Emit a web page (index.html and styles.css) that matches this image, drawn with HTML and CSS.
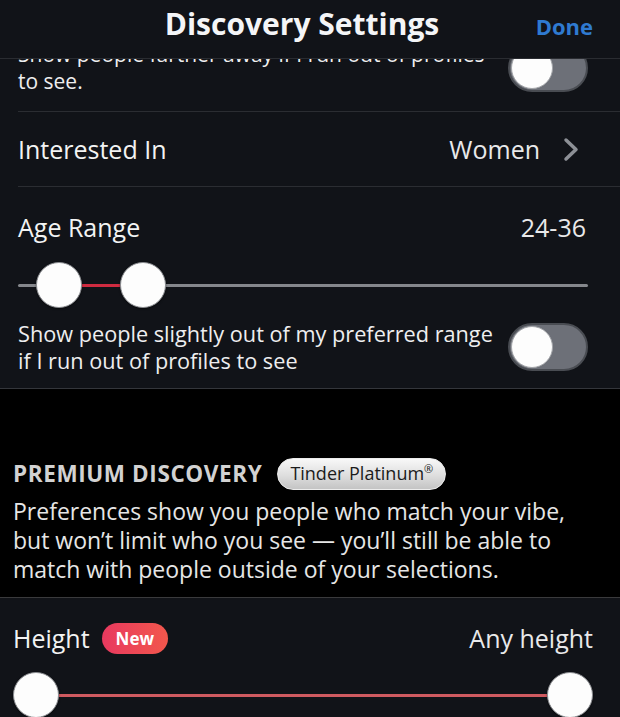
FILE: index.html
```html
<!DOCTYPE html>
<html lang="en">
<head>
	<meta charset="UTF-8">
	<title>Discovery Settings</title>
	<link rel="stylesheet" href="styles.css">
</head>
<body>
<div class="screen">
	<header class="topbar">
		<span></span>
		<h1>Discovery Settings</h1>
		<a class="done" href="#">Done</a>
	</header>

	<div class="viewport">
		<div class="list">
			<div class="row row-first">
				<p class="sub">Show people farther away if I run out of profiles to see.</p>
				<span class="switch"><span class="knob"></span></span>
			</div>

			<div class="row row-link">
				<span class="label">Interested In</span>
				<span class="value">Women
					<svg class="chev" width="16" height="25" viewBox="0 0 16 25"><polyline points="3,3 13,12.5 3,22" fill="none" stroke="#8d9096" stroke-width="3.5" stroke-linecap="round" stroke-linejoin="round"/></svg>
				</span>
			</div>

			<div class="row-age">
				<div class="head">
					<span class="label">Age Range</span>
					<span class="value">24-36</span>
				</div>
				<div class="slider">
					<span class="track"></span>
					<span class="fill" style="left:7.9%;width:15.8%"></span>
					<span class="thumb" style="--pos:0.035"></span>
					<span class="thumb" style="--pos:0.195"></span>
				</div>
				<div class="opt">
					<p class="sub">Show people slightly out of my preferred range if I run out of profiles to see</p>
					<span class="switch"><span class="knob"></span></span>
				</div>
			</div>

			<div class="premium">
				<div class="premium-head">
					<h2>PREMIUM DISCOVERY</h2>
					<span class="pill">Tinder Platinum<sup>®</sup></span>
				</div>
				<p>Preferences show you people who match your vibe, but won’t limit who you see — you’ll still be able to match with people outside of your selections.</p>
			</div>

			<div class="row-height">
				<div class="head">
					<span class="label">Height <span class="badge">New</span></span>
					<span class="value">Any height</span>
				</div>
				<div class="slider slider-red">
					<span class="track"></span>
					<span class="thumb" style="--pos:0"></span>
					<span class="thumb" style="--pos:1"></span>
				</div>
			</div>
		</div>
	</div>
</div>
</body>
</html>
```

FILE: styles.css
```css
body,h1,h2,p{
	margin:0;
	padding:0;
}
body{
	background:#111318;
	font-family:"Open Sans","Liberation Sans",sans-serif;
	color:#f3f3f3;
}
.screen{
	width:620px;
	height:717px;
	display:flex;
	flex-direction:column;
	overflow:hidden;
	background:#111318;
}

/* top bar */
.topbar{
	height:59px;
	border-bottom:1px solid #2a2c31;
	display:grid;
	grid-template-columns:1fr auto 1fr;
	align-items:baseline;
	padding-top:3px;
	box-sizing:border-box;
	flex:none;
	position:relative;
	z-index:2;
	background:#111318;
}
.topbar h1{
	font-size:30px;
	font-weight:700;
	line-height:41px;
	color:#f4f5f7;
	margin-right:16px;
}
.done{
	justify-self:end;
	margin-right:27px;
	font-size:22px;
	font-weight:700;
	color:#2f7ad0;
	text-decoration:none;
}

.viewport{
	flex:1;
	overflow:hidden;
}
.list{
	margin-top:-35px;
}

/* rows */
.row{
	display:flex;
	align-items:center;
	justify-content:space-between;
	margin-left:18px;
	padding-right:32px;
	border-bottom:1px solid #2b2d32;
}
.row-first{
	padding-top:17px;
	padding-bottom:16px;
	gap:12px;
}
.row-first .sub{
	font-size:21px;
}
.row-link{
	height:74px;
}
.label{
	font-size:25px;
	line-height:34px;
	display:flex;
	align-items:center;
}
.value{
	font-size:25px;
	line-height:34px;
	color:#e9e9ea;
	display:flex;
	align-items:center;
}
.chev{
	margin-left:23px;
	margin-right:9px;
}
.sub{
	font-size:21.7px;
	line-height:27px;
	color:#eeeeef;
	flex:1;
}

/* toggle */
.switch{
	flex:none;
	width:80px;
	height:48px;
	box-sizing:border-box;
	border-radius:24px;
	border:2px solid #494c52;
	background:#6d7078;
	display:flex;
	align-items:center;
	padding-left:1px;
}
.knob{
	width:42px;
	height:42px;
	box-sizing:border-box;
	border-radius:50%;
	background:#fdfdfd;
	border:1px solid #a4a6aa;
}

/* age */
.row-age{
	padding:23px 32px 14px 18px;
	border-bottom:1px solid #34363b;
}
.head{
	display:flex;
	justify-content:space-between;
	align-items:center;
}
.row-age .value{
	margin-right:2px;
}
.slider{
	position:relative;
	height:46px;
	margin-top:18px;
}
.track{
	display:block;
	position:relative;
	top:22px;
	height:3px;
	border-radius:2px;
	background:#85878c;
}
.fill{
	position:absolute;
	top:22px;
	height:3px;
	background:#cf2b40;
}
.thumb{
	position:absolute;
	top:0;
	left:calc(23px + (100% - 46px) * var(--pos));
	width:46px;
	height:46px;
	box-sizing:border-box;
	margin-left:-23px;
	border-radius:50%;
	background:#fdfdfd;
	border:1.5px solid #8a8c90;
	box-shadow:0 1px 2px rgba(0,0,0,.5);
}
.opt{
	display:flex;
	align-items:center;
	gap:12px;
	margin-top:12px;
}

/* premium */
.premium{
	background:#000;
	padding:69px 20px 13px 13px;
	border-bottom:1px solid #3a3a3c;
}
.premium-head{
	display:flex;
	align-items:center;
	gap:15px;
	height:32px;
}
.premium h2{
	font-size:22.5px;
	letter-spacing:0.6px;
	font-weight:700;
	color:#d2d2d2;
	line-height:32px;
}
.pill{
	height:32px;
	box-sizing:border-box;
	padding:0 12px;
	border-radius:16px;
	border:1.5px solid #ececec;
	background:linear-gradient(180deg,#f8f8f8 0%,#dedede 55%,#c4c4c4 100%);
	color:#1b1b1b;
	font-size:18px;
	line-height:29px;
}
.pill sup{
	font-size:11px;
	vertical-align:7px;
	line-height:0;
}
.premium p{
	margin-top:7px;
	font-size:23px;
	line-height:29px;
	color:#e6e6e6;
}

/* height */
.row-height{
	padding:23px 27px 0 13px;
}
.badge{
	margin-left:12px;
	height:31px;
	padding:0 14px;
	border-radius:16px;
	background:linear-gradient(90deg,#e8395f,#f2574c);
	color:#fff;
	font-size:17px;
	font-weight:700;
	line-height:31px;
}
.row-height .slider{
	margin-top:17px;
}
.slider-red .track{
	background:#cf5a60;
	margin:0 20px;
}
```
